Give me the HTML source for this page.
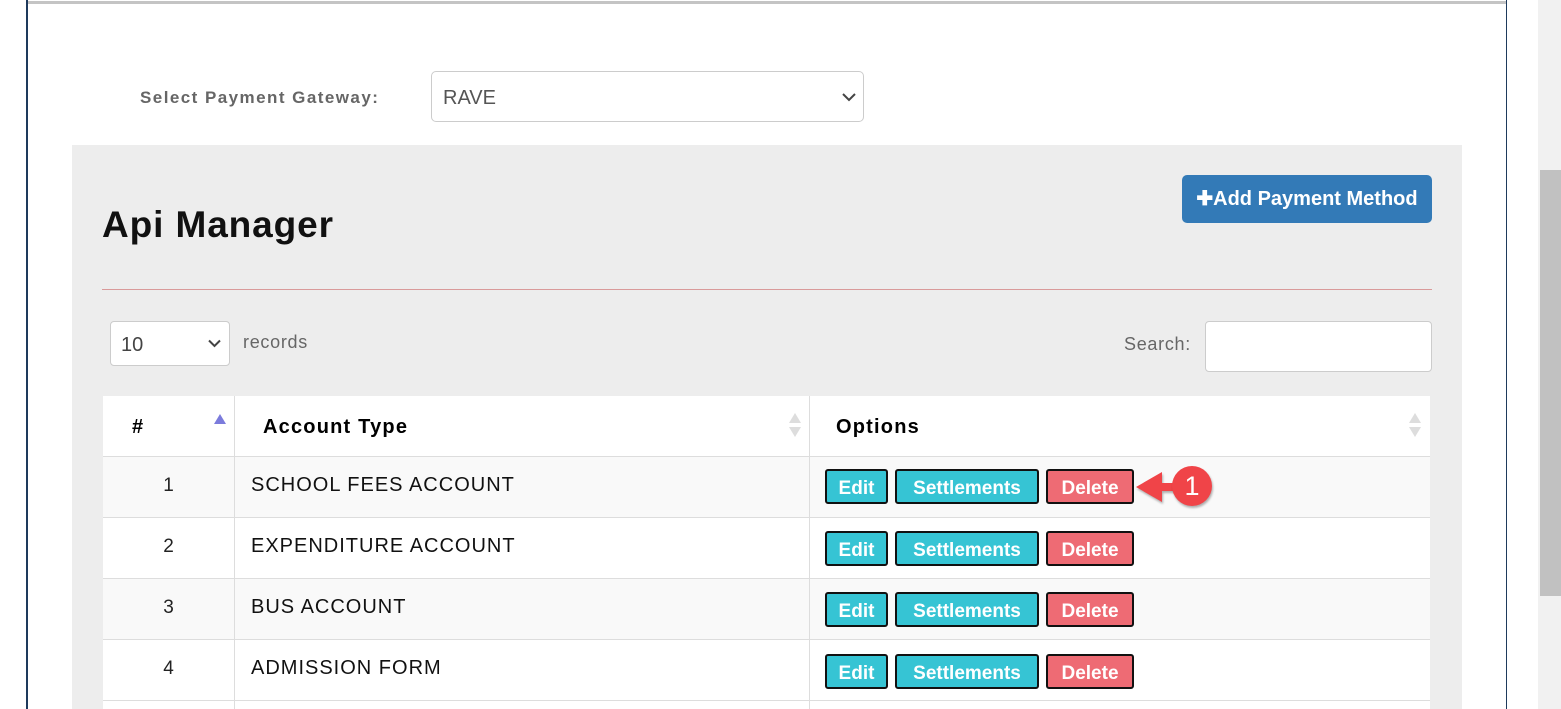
<!DOCTYPE html>
<html><head><meta charset="utf-8"><style>
*{margin:0;padding:0;box-sizing:border-box}
body{width:1561px;height:709px;overflow:hidden;background:#fff;font-family:"Liberation Sans",Arial,sans-serif;position:relative}
.a{position:absolute}
.btn{position:absolute;height:35px;border:2px solid #111;border-radius:3px;color:#fff;font-weight:bold;font-size:19px;text-align:center;line-height:35px}
.e{background:#36c4d4;width:63px}
.s{background:#36c4d4;width:144px}
.d{background:#ee6b74;width:88px}
.row{position:absolute;left:103px;width:1327px;height:61px;border-bottom:1px solid #ddd}
.row .n{position:absolute;left:0;width:131px;text-align:center;top:18px;font-size:19px;color:#222}
.row .t{position:absolute;left:148px;top:17px;font-size:20px;letter-spacing:1px;color:#111}
.vl{position:absolute;top:0;bottom:0;width:1px;background:#ddd}
</style></head><body>
<div class="a" style="left:26px;top:0;width:2px;height:709px;background:#1e3a5c"></div>
<div class="a" style="left:1506px;top:0;width:1px;height:709px;background:#1e3a5c"></div>
<div class="a" style="left:28px;top:1px;width:1478px;height:3px;background:#c4c4c4"></div>
<div class="a" style="left:1538px;top:0;width:23px;height:709px;background:#f1f1f1"></div>
<div class="a" style="left:1540px;top:170px;width:21px;height:426px;background:#c1c1c1"></div>

<div class="a" style="left:140px;top:88px;font-size:17px;font-weight:bold;color:#666;letter-spacing:1.45px">Select Payment Gateway:</div>
<div class="a" style="left:431px;top:71px;width:433px;height:51px;border:1px solid #ccc;border-radius:5px;background:#fff">
<span class="a" style="left:11px;top:15px;font-size:20px;color:#555">RAVE</span>
<svg class="a" style="left:410px;top:20px" width="14" height="10" viewBox="0 0 14 10"><path d="M1 2l6 6 6-6" stroke="#444" stroke-width="2" fill="none"/></svg></div>

<div class="a" style="left:72px;top:145px;width:1390px;height:564px;background:#ededed"></div>
<div class="a" style="left:102px;top:204px;font-size:37px;font-weight:bold;color:#111;letter-spacing:0.9px">Api Manager</div>
<div class="a" style="left:1182px;top:175px;width:250px;height:48px;background:#337ab7;border-radius:5px;color:#fff;font-weight:bold;font-size:20px;line-height:48px;text-align:center">✚Add Payment Method</div>
<div class="a" style="left:102px;top:289px;width:1330px;height:1px;background:#d99a9a"></div>

<div class="a" style="left:110px;top:321px;width:120px;height:45px;border:1px solid #ccc;border-radius:4px;background:#fff">
<span class="a" style="left:10px;top:12px;font-size:20px;color:#444">10</span>
<svg class="a" style="left:97px;top:17px" width="13" height="9" viewBox="0 0 13 9"><path d="M1 1.5l5.5 5.5 5.5-5.5" stroke="#444" stroke-width="2" fill="none"/></svg></div>
<div class="a" style="left:243px;top:332px;font-size:18px;color:#666;letter-spacing:0.7px">records</div>
<div class="a" style="left:1124px;top:334px;font-size:18px;color:#666;letter-spacing:0.7px">Search:</div>
<div class="a" style="left:1205px;top:321px;width:227px;height:51px;border:1px solid #ccc;border-radius:4px;background:#fff"></div>

<div class="a" style="left:103px;top:396px;width:1327px;height:313px;background:#fff">
<div class="vl" style="left:131px"></div><div class="vl" style="left:706px"></div>
</div>
<div class="row" style="top:396px;height:61px;background:#fff">
<div class="vl" style="left:131px"></div><div class="vl" style="left:706px"></div>
<span class="a" style="left:29px;top:20px;font-size:20px;font-weight:bold">#</span>
<svg class="a" style="left:111px;top:18px" width="12" height="10"><path d="M6 0L12 10H0z" fill="#7b7bdc"/></svg>
<span class="a" style="left:160px;top:20px;font-size:20px;font-weight:bold;letter-spacing:1.2px">Account Type</span>
<svg class="a" style="left:686px;top:17px" width="12" height="24"><path d="M6 0L12 10H0z M6 24L0 14H12z" fill="#ddd"/></svg>
<span class="a" style="left:733px;top:20px;font-size:20px;font-weight:bold;letter-spacing:1.2px">Options</span>
<svg class="a" style="left:1306px;top:17px" width="12" height="24"><path d="M6 0L12 10H0z M6 24L0 14H12z" fill="#ddd"/></svg>
</div>
<div class="a" style="left:103px;top:456px;width:1327px;height:1px;background:#ddd"></div>

<div class="row" style="top:457px;background:#f9f9f9"><div class="vl" style="left:131px"></div><div class="vl" style="left:706px"></div><span class="n">1</span><span class="t">SCHOOL FEES ACCOUNT</span></div>
<div class="row" style="top:518px;background:#fff"><div class="vl" style="left:131px"></div><div class="vl" style="left:706px"></div><span class="n">2</span><span class="t">EXPENDITURE ACCOUNT</span></div>
<div class="row" style="top:579px;background:#f9f9f9"><div class="vl" style="left:131px"></div><div class="vl" style="left:706px"></div><span class="n">3</span><span class="t">BUS ACCOUNT</span></div>
<div class="row" style="top:640px;background:#fff"><div class="vl" style="left:131px"></div><div class="vl" style="left:706px"></div><span class="n">4</span><span class="t">ADMISSION FORM</span></div>

<div class="btn e" style="left:825px;top:469px">Edit</div><div class="btn s" style="left:895px;top:469px">Settlements</div><div class="btn d" style="left:1046px;top:469px">Delete</div>
<div class="btn e" style="left:825px;top:531px">Edit</div><div class="btn s" style="left:895px;top:531px">Settlements</div><div class="btn d" style="left:1046px;top:531px">Delete</div>
<div class="btn e" style="left:825px;top:592px">Edit</div><div class="btn s" style="left:895px;top:592px">Settlements</div><div class="btn d" style="left:1046px;top:592px">Delete</div>
<div class="btn e" style="left:825px;top:654px">Edit</div><div class="btn s" style="left:895px;top:654px">Settlements</div><div class="btn d" style="left:1046px;top:654px">Delete</div>

<svg class="a" style="left:1130px;top:462px" width="90" height="52">
<path d="M6 25L32 10V21H50V29H32V40Z" fill="#f04448" style="filter:drop-shadow(1px 2px 1px rgba(0,0,0,.3))"/>
<circle cx="62" cy="24" r="20" fill="#f04448" style="filter:drop-shadow(1px 2px 1px rgba(0,0,0,.3))"/>
<text x="62" y="33" text-anchor="middle" font-family="Liberation Sans" font-size="27" fill="#fff">1</text>
</svg>
</body></html>
